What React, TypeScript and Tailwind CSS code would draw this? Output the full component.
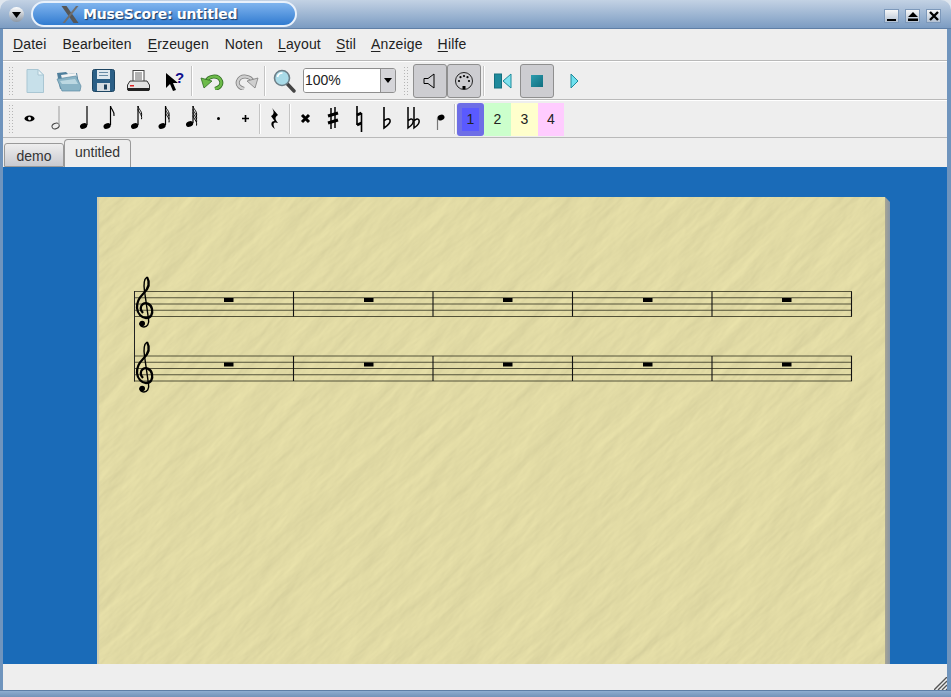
import React from "react";

const uiFont = "font-['Liberation_Sans',Arial,sans-serif]";

const menuItems: { pre: string; key: string; post: string; left: string }[] = [
  { pre: "", key: "D", post: "atei", left: "ml-[10px]" },
  { pre: "B", key: "e", post: "arbeiten", left: "ml-[16px]" },
  { pre: "", key: "E", post: "rzeugen", left: "ml-[16px]" },
  { pre: "", key: "", post: "Noten", left: "ml-[16px]" },
  { pre: "", key: "L", post: "ayout", left: "ml-[15px]" },
  { pre: "", key: "S", post: "til", left: "ml-[15px]" },
  { pre: "", key: "A", post: "nzeige", left: "ml-[15px]" },
  { pre: "", key: "H", post: "ilfe", left: "ml-[15px]" },
];

const Handle = () => (
  <div className="w-[6px] h-[30px] bg-[radial-gradient(circle,#b5b5b5_1px,transparent_1px)] bg-size-[3px_3px] shrink-0" />
);

const Sep = () => <div className="w-[2px] h-[30px] bg-[#c4c4c4] border-r border-white shrink-0" />;

const Head = ({ x, y, hollow }: { x: number; y: number; hollow?: boolean }) => (
  <ellipse
    cx={x}
    cy={y}
    rx={3.7}
    ry={2.7}
    transform={`rotate(-22 ${x} ${y})`}
    fill={hollow ? "none" : "#000"}
    stroke={hollow ? "#444" : "none"}
  />
);

// note with flag count, drawn in a 27x34 cell; stem is the stem's x in the cell
const Note = ({ flags = 0, hollow, stem = 17 }: { flags?: number; hollow?: boolean; stem?: number }) => {
  const bottom = flags > 3 ? 22 : 24;
  const top = 4;
  const paths = [];
  for (let i = 0; i < flags; i++) {
    const t = top + i * 3.2;
    paths.push(
      <path
        key={i}
        d={`M${stem} ${t} C${stem + 0.5} ${t + 3.5} ${stem + 4.5} ${t + 5} ${stem + 3.5} ${t + 10}`}
        fill="none"
        stroke="#000"
        strokeWidth={flags > 1 ? 1 : 1.1}
      />,
    );
  }
  return (
    <svg width={27} height={34} viewBox="0 0 27 34">
      <Head x={stem - 3.4} y={bottom} hollow={hollow} />
      <line x1={stem} y1={top} x2={stem} y2={bottom - 1} stroke={hollow ? "#aaa" : "#000"} strokeWidth={1.2} />
      {paths}
    </svg>
  );
};

const noteCell = "w-[27px] h-[34px] shrink-0 flex items-center justify-center";

const Whole = () => (
  <svg width={27} height={34} viewBox="0 0 27 34">
    <ellipse cx={13.5} cy={16.5} rx={5} ry={3} fill="#000" />
    <ellipse cx={13.5} cy={16.5} rx={1.5} ry={1.7} fill="#eee" transform="rotate(-30 13.5 16.5)" />
  </svg>
);

const Glyph = ({ children }: { children: React.ReactNode }) => (
  <svg width={27} height={34} viewBox="0 0 27 34">
    {children}
  </svg>
);

const CheckedButton = ({ children, left }: { children: React.ReactNode; left: string }) => (
  <div
    className={`${left} w-[34px] h-[34px] shrink-0 rounded-[3px] border border-[#8f8f8f] bg-[#cdcdd1] flex items-center justify-center`}
  >
    {children}
  </div>
);

const voices = [
  { n: "1", cls: "w-[27px] bg-[#5a5aff] border-[5px] border-[#6e6ee6] rounded-[3px]" },
  { n: "2", cls: "w-[27px] bg-[#ccffcc]" },
  { n: "3", cls: "w-[27px] bg-[#ffffcc]" },
  { n: "4", cls: "w-[26px] bg-[#ffccff]" },
];

const Clef = ({ dy }: { dy: number }) => (
  <g transform={`translate(0 ${dy})`} fill="none" stroke="#000">
    <path d="M147 277 C150.5 283 148.5 289 143 294 C139 298 136.5 302 137 308 C137.5 314 142 318 146 318 C151 318 153 314 152 309 C151 304 146 302 143 304 C140 306 140 310 143 313" strokeWidth={2.3} />
    <path d="M147 277 C144 279 143.5 284 144.5 291 L148.5 319 C149.5 324 147 327 144 327 C141 327 139.5 325 140 323" strokeWidth={1.4} />
    <circle cx={142.2} cy={323.5} r={2.8} fill="#000" stroke="none" />
  </g>
);

const bars = [293.5, 433, 572.5, 712, 851.5];
const rests = [224, 364, 503, 643, 782];

const Staff = ({ top }: { top: number }) => (
  <g>
    {[0, 6.25, 12.5, 18.75, 25].map((d) => (
      <line key={d} x1={134} x2={852} y1={top + d} y2={top + d} stroke="#44432c" strokeWidth={0.9} />
    ))}
    {bars.map((x) => (
      <line key={x} x1={x} x2={x} y1={top} y2={top + 25} stroke="#111" strokeWidth={1.1} />
    ))}
    {rests.map((x) => (
      <rect key={x} x={x} y={top + 6.5} width={9.5} height={4} fill="#000" />
    ))}
  </g>
);

const titleBtn = "w-[15px] h-[14px] bg-linear-to-b from-[#f8f8f8] to-[#b4c2d3] border border-[#7c98ba]";

export default function App() {
  return (
    <div className={`w-[951px] h-[697px] overflow-hidden flex flex-col bg-[#dfe6ee] text-[#222] ${uiFont}`}>
      {/* title bar */}
      <div className="h-[29px] shrink-0 flex items-start rounded-t-[10px] bg-linear-to-b from-[#c3d2e4] to-[#7c9cc2] border-b border-[#5f7fa6]">
        <div className="ml-[9px] mt-[7px] w-[15px] h-[15px] rounded-full bg-linear-to-b from-white to-[#8d97a3] flex items-center justify-center">
          <svg width={9} height={6} viewBox="0 0 9 6">
            <path d="M0 0 H9 L4.5 6 Z" fill="#000" />
          </svg>
        </div>
        <div className="ml-[7px] mt-px w-[266px] h-[26px] rounded-[13px] border-2 border-[#e9f1fb] bg-linear-to-b from-[#7fb4ee] to-[#2f7bd0] flex items-center">
          <svg className="ml-[28px]" width={18} height={17} viewBox="0 0 18 17">
            <path d="M0.5 0 L5.5 0 L17.5 17 L12.5 17 Z" fill="#565656" />
            <path d="M15 0 L17.5 0 L4 17 L1.5 17 Z" fill="#6f6f6f" />
          </svg>
          <span className="ml-[4px] text-[14px] tracking-[-0.25px] font-bold text-white font-['DejaVu_Sans',sans-serif] [text-shadow:1px_1px_1px_#16365f]">
            MuseScore: untitled
          </span>
        </div>
        <div className="ml-auto mr-[10px] mt-[9px] flex gap-[6px]">
          <div className={`${titleBtn} flex items-end justify-center pb-[1px]`}>
            <div className="w-[9px] h-[2px] bg-black" />
          </div>
          <div className={`${titleBtn} flex items-center justify-center`}>
            <svg width={10} height={9} viewBox="0 0 10 9">
              <path d="M5 0 L10 5 H0 Z M0 6.5 H10 V9 H0 Z" fill="#000" />
            </svg>
          </div>
          <div className={`${titleBtn} flex items-center justify-center`}>
            <svg width={10} height={10} viewBox="0 0 10 10">
              <path d="M1 1 L9 9 M9 1 L1 9" stroke="#000" strokeWidth={2.4} />
            </svg>
          </div>
        </div>
      </div>

      <div className="flex-1 min-h-0 flex flex-col border-x-[3px] border-[#6f94bd] bg-[#eeeeee] border-r-4">
        {/* menu */}
        <div className="h-[32px] shrink-0 flex items-center text-[14px] border-b border-[#b9b9b9]">
          {menuItems.map((m) => (
            <span key={m.post} className={`${m.left} tracking-[0.15px]`}>
              {m.pre}
              <span className="underline underline-offset-2">{m.key}</span>
              {m.post}
            </span>
          ))}
        </div>

        {/* main toolbar */}
        <div className="h-[39px] shrink-0 flex items-center border-b border-[#b9b9b9] border-t border-t-white">
          <div className="ml-[5px]"><Handle /></div>
          <svg className="ml-[12px] shrink-0" width={18} height={24} viewBox="0 0 18 24">
            <path d="M1 0.5 H12 L17.5 6 V23.5 H1 Z" fill="#c7e0ea" stroke="#a9c6d3" />
            <path d="M12 0.5 L17.5 6 H12 Z" fill="#eaf5f9" stroke="#a9c6d3" />
          </svg>
          <svg className="ml-[12px] shrink-0" width={26} height={22} viewBox="0 0 26 22">
            <path d="M1 3 L10 2 L12 4 L21 3 L23 14 L4 19 Z" fill="#4f7f9c" />
            <path d="M5 5 L20 3 L21 8 L6 9 Z" fill="#f4f4f4" />
            <path d="M1 9 L20 6 L25 16 L24 21 L6 21 Z" fill="#8ab4c6" stroke="#5d8ba3" strokeWidth={0.7} />
            <path d="M4 11 L19 9 L22 14 L6 14 Z" fill="#bcd8e2" />
          </svg>
          <svg className="ml-[10px] shrink-0" width={23} height={23} viewBox="0 0 23 23">
            <rect x={0.5} y={0.5} width={22} height={22} rx={2} fill="#2b5f86" stroke="#1d4562" />
            <rect x={5} y={1} width={13} height={9} fill="#dfe8ee" />
            <rect x={7} y={3} width={9} height={1} fill="#6a8ca5" />
            <rect x={7} y={6} width={9} height={1} fill="#6a8ca5" />
            <rect x={5} y={14} width={13} height={8} fill="#d6dde2" />
            <rect x={12} y={15.5} width={3} height={5} fill="#1d3f5a" />
          </svg>
          <svg className="ml-[12px] shrink-0" width={23} height={22} viewBox="0 0 23 22">
            <rect x={6} y={0.5} width={11} height={12} fill="#fff" stroke="#444" />
            <path d="M8 3 H15 M8 5 H15 M8 7 H15 M8 9 H15" stroke="#666" />
            <path d="M3 11 H20 L22.5 15 V20 H0.5 V15 Z" fill="#e3e3e3" stroke="#333" />
            <rect x={1} y={18} width={21} height={3} fill="#222" />
            <rect x={3} y={15} width={4} height={1.5} fill="#d22" />
          </svg>
          <svg className="ml-[15px] shrink-0" width={19} height={22} viewBox="0 0 19 22">
            <path d="M1 3 L1 18 L5 14 L8 21 L11 20 L8 13 L13 13 Z" fill="#000" />
            <text x={10} y={13} fontSize={15} fontWeight={700} fill="#10108c" fontFamily="Liberation Sans, sans-serif">?</text>
          </svg>
          <div className="ml-[7px]"><Sep /></div>
          <svg className="ml-[7px] shrink-0" width={24} height={18} viewBox="0 0 24 18">
            <path d="M6 10 C8 4 18 2 21 9 C22.5 13 19 16 15 17" fill="none" stroke="#2f6b22" strokeWidth={4} />
            <path d="M6 10 C8 4 18 2 21 9 C22.5 13 19 16 15 17" fill="none" stroke="#6dbb4a" strokeWidth={2.4} />
            <path d="M1 6 L12 9 L4 16 Z" fill="#6dbb4a" stroke="#2f6b22" strokeWidth={0.8} />
          </svg>
          <svg className="ml-[11px] shrink-0" width={24} height={18} viewBox="0 0 24 18">
            <path d="M18 10 C16 4 6 2 3 9 C1.5 13 5 16 9 17" fill="none" stroke="#7e7e7e" strokeWidth={4} />
            <path d="M18 10 C16 4 6 2 3 9 C1.5 13 5 16 9 17" fill="none" stroke="#cfcfcf" strokeWidth={2.4} />
            <path d="M23 6 L12 9 L20 16 Z" fill="#cfcfcf" stroke="#7e7e7e" strokeWidth={0.8} />
          </svg>
          <div className="ml-[5px]"><Sep /></div>
          <svg className="ml-[7px] shrink-0" width={23} height={24} viewBox="0 0 23 24">
            <path d="M13.5 14 L21 22" stroke="#444" strokeWidth={3.4} strokeLinecap="round" />
            <circle cx={9} cy={9} r={7.5} fill="#a9dbe8" stroke="#6d7f88" strokeWidth={1.6} />
            <path d="M4.5 8 C5 5.5 7 4 9.5 4" stroke="#fff" strokeWidth={1.6} fill="none" />
          </svg>
          {/* zoom combo */}
          <div className="ml-[7px] w-[93px] h-[25px] shrink-0 flex rounded-[3px] border border-[#8f8f8f] overflow-hidden">
            <div className="w-[77px] bg-white border-r border-[#8f8f8f] pl-px text-[14px] leading-[23px]">100%</div>
            <div className="flex-1 bg-[#d5d5d9] flex items-center justify-center">
              <svg width={8} height={5} viewBox="0 0 8 5">
                <path d="M0 0 H8 L4 5 Z" fill="#000" />
              </svg>
            </div>
          </div>
          <div className="ml-[7px]"><Handle /></div>
          <CheckedButton left="ml-[4px]">
            <svg width={14} height={16} viewBox="0 0 14 16">
              <path d="M1 5.5 H5 L11 1 V15 L5 10.5 H1 Z" fill="none" stroke="#000" />
            </svg>
          </CheckedButton>
          <CheckedButton left="ml-0">
            <svg width={20} height={20} viewBox="0 0 20 20">
              <circle cx={10} cy={10} r={8.5} fill="none" stroke="#222" />
              <circle cx={5} cy={10} r={1.1} fill="#000" />
              <circle cx={15} cy={10} r={1.1} fill="#000" />
              <circle cx={6.5} cy={6.2} r={1.1} fill="#000" />
              <circle cx={13.5} cy={6.2} r={1.1} fill="#000" />
              <circle cx={10} cy={5} r={1.1} fill="#000" />
              <rect x={8.5} y={15} width={3} height={3} fill="#000" />
            </svg>
          </CheckedButton>
          <div className="ml-[2px]"><Sep /></div>
          <svg className="ml-[9px] shrink-0" width={18} height={16} viewBox="0 0 18 16">
            <rect x={0.5} y={1} width={7} height={14} fill="#1f8a9c" stroke="#14707f" />
            <path d="M17 1 V15 L9 8 Z" fill="#7fe3ef" stroke="#1d8a9b" />
          </svg>
          <CheckedButton left="ml-[8px]">
            <div className="w-[12px] h-[12px] bg-linear-to-br from-[#2c9cae] to-[#0f6f80]" />
          </CheckedButton>
          <svg className="ml-[16px] shrink-0" width={9} height={16} viewBox="0 0 9 16">
            <path d="M1 1 L8 8 L1 15 Z" fill="#6fe0ee" stroke="#1d8a9b" />
          </svg>
        </div>

        {/* note toolbar */}
        <div className="h-[38px] shrink-0 flex items-center border-b border-[#b9b9b9] border-t border-t-white">
          <div className="ml-[5px] mr-[2px]"><Handle /></div>
          <div className={noteCell}><Whole /></div>
          <div className={noteCell}><Note hollow stem={16} /></div>
          <div className={noteCell}><Note stem={17} /></div>
          <div className={noteCell}><Note flags={1} stem={13.5} /></div>
          <div className={noteCell}><Note flags={2} stem={14} /></div>
          <div className={noteCell}><Note flags={3} stem={14.5} /></div>
          <div className={noteCell}><Note flags={4} stem={15} /></div>
          <div className={noteCell}>
            <Glyph><circle cx={13.5} cy={16.5} r={1.5} fill="#000" /></Glyph>
          </div>
          <div className={noteCell}>
            <Glyph><path d="M10 16.5 H17 M13.5 13 V20" stroke="#000" strokeWidth={1.6} /></Glyph>
          </div>
          <Sep />
          <div className={noteCell}>
            <Glyph>
              <path d="M11 6 L17 13 C14 15 13.5 17 17 21 C13 19.5 11 21 14 27 C9 24 9.5 19 13.5 19 L10 14 C13 12.5 13.5 10 11 6 Z" fill="#000" />
            </Glyph>
          </div>
          <div className="ml-px"><Sep /></div>
          <div className={`${noteCell} ml-px`}>
            <Glyph><path d="M10 13 L17 20 M17 13 L10 20" stroke="#000" strokeWidth={3} /></Glyph>
          </div>
          <div className={noteCell}>
            <Glyph>
              <path d="M12 6 V27 M16 5 V26" stroke="#000" strokeWidth={1.5} />
              <path d="M9 14 L19 11 M9 21 L19 18" stroke="#000" strokeWidth={3} />
            </Glyph>
          </div>
          <div className={noteCell}>
            <Glyph>
              <path d="M11 4 V23 M15.5 11 V30" stroke="#000" strokeWidth={1.6} />
              <path d="M11 13 L15.5 11 M11 23 L15.5 21" stroke="#000" strokeWidth={3} />
            </Glyph>
          </div>
          <div className={noteCell}>
            <Glyph>
              <path d="M11 5 V26 C14 24 18 21 17 18 C16 16 13 17 11 19" fill="none" stroke="#000" strokeWidth={1.6} />
            </Glyph>
          </div>
          <div className={noteCell}>
            <Glyph>
              <path d="M8 5 V26 C11 24 14 21 13 18 C12 16 10 17 8 19" fill="none" stroke="#000" strokeWidth={1.5} />
              <path d="M14 5 V26 C17 24 20 21 19 18 C18 16 16 17 14 19" fill="none" stroke="#000" strokeWidth={1.5} />
            </Glyph>
          </div>
          <div className={noteCell}>
            <Glyph>
              <ellipse cx={14} cy={15.5} rx={3.6} ry={2.8} fill="#000" transform="rotate(-25 14 15.5)" />
              <line x1={10.5} y1={16} x2={10.5} y2={28} stroke="#777" strokeWidth={1.2} />
            </Glyph>
          </div>
          <Sep />
          <div className="ml-px flex text-[14px] h-[33px]">
            {voices.map((v) => (
              <div key={v.n} className={`flex items-center justify-center ${v.cls}`}>
                {v.n}
              </div>
            ))}
          </div>
        </div>

        {/* tabs */}
        <div className="h-[29px] shrink-0 flex items-end pl-px text-[14px]">
          <div className="w-[60px] h-[24px] rounded-t-[3px] border border-[#999] bg-linear-to-b from-[#eeeeee] to-[#c9cad0] text-center leading-[24px] text-[#333]">
            demo
          </div>
          <div className="w-[67px] h-[28px] rounded-t-[4px] border border-b-0 border-[#999] bg-[#eeeeee] text-center leading-[24px] text-[#333]">
            untitled
          </div>
        </div>

        {/* score canvas */}
        <div className="flex-1 min-h-0 overflow-hidden bg-[#1a6bb8] flex pl-[94px] pt-[30px]">
          <div className="relative w-[788px] h-[480px] bg-[#e0d9a2] border-l-2 border-[#d0cdb0] shrink-0 overflow-hidden">
            <svg className="absolute inset-0" width={788} height={480}>
              <defs>
                <filter id="paper" x="0" y="0" width="100%" height="100%" colorInterpolationFilters="sRGB">
                  <feTurbulence type="fractalNoise" baseFrequency="0.012 0.05" numOctaves={5} seed={4} result="n" />
                  <feDiffuseLighting in="n" surfaceScale={0.55} diffuseConstant={1.15} lightingColor="#e2dba5">
                    <feDistantLight azimuth={45} elevation={60} />
                  </feDiffuseLighting>
                </filter>
              </defs>
              <rect x={-500} y={-500} width={1900} height={1900} filter="url(#paper)" transform="rotate(-42 394 240)" />
            </svg>
            <svg className="relative ml-[31px] mt-[73px]" width={726} height={125} viewBox="130 270 726 125">
              <Staff top={291.5} />
              <Staff top={356} />
              <line x1={134.5} x2={134.5} y1={291} y2={381.5} stroke="#222" strokeWidth={1} />
              <Clef dy={0} />
              <Clef dy={65} />
            </svg>
          </div>
          <div className="w-[5px] h-[480px] shrink-0 bg-linear-to-r from-[#a7a594] to-[#8795a5] [clip-path:polygon(0_0,100%_5px,100%_100%,0_100%)]" />
        </div>

        {/* status bar */}
        <div className="h-[26px] shrink-0 bg-[#eeeeee] flex items-end justify-end">
          <svg width={13} height={13} viewBox="0 0 13 13">
            <path d="M0 13 L13 0 M4 13 L13 4 M8 13 L13 8 M12 13 L13 12" stroke="#555" strokeWidth={1.4} />
          </svg>
        </div>
      </div>
      <div className="h-[7px] shrink-0 bg-linear-to-b from-[#8fadd0] to-[#7393b8] border-t border-[#5f7fa6]" />
    </div>
  );
}
